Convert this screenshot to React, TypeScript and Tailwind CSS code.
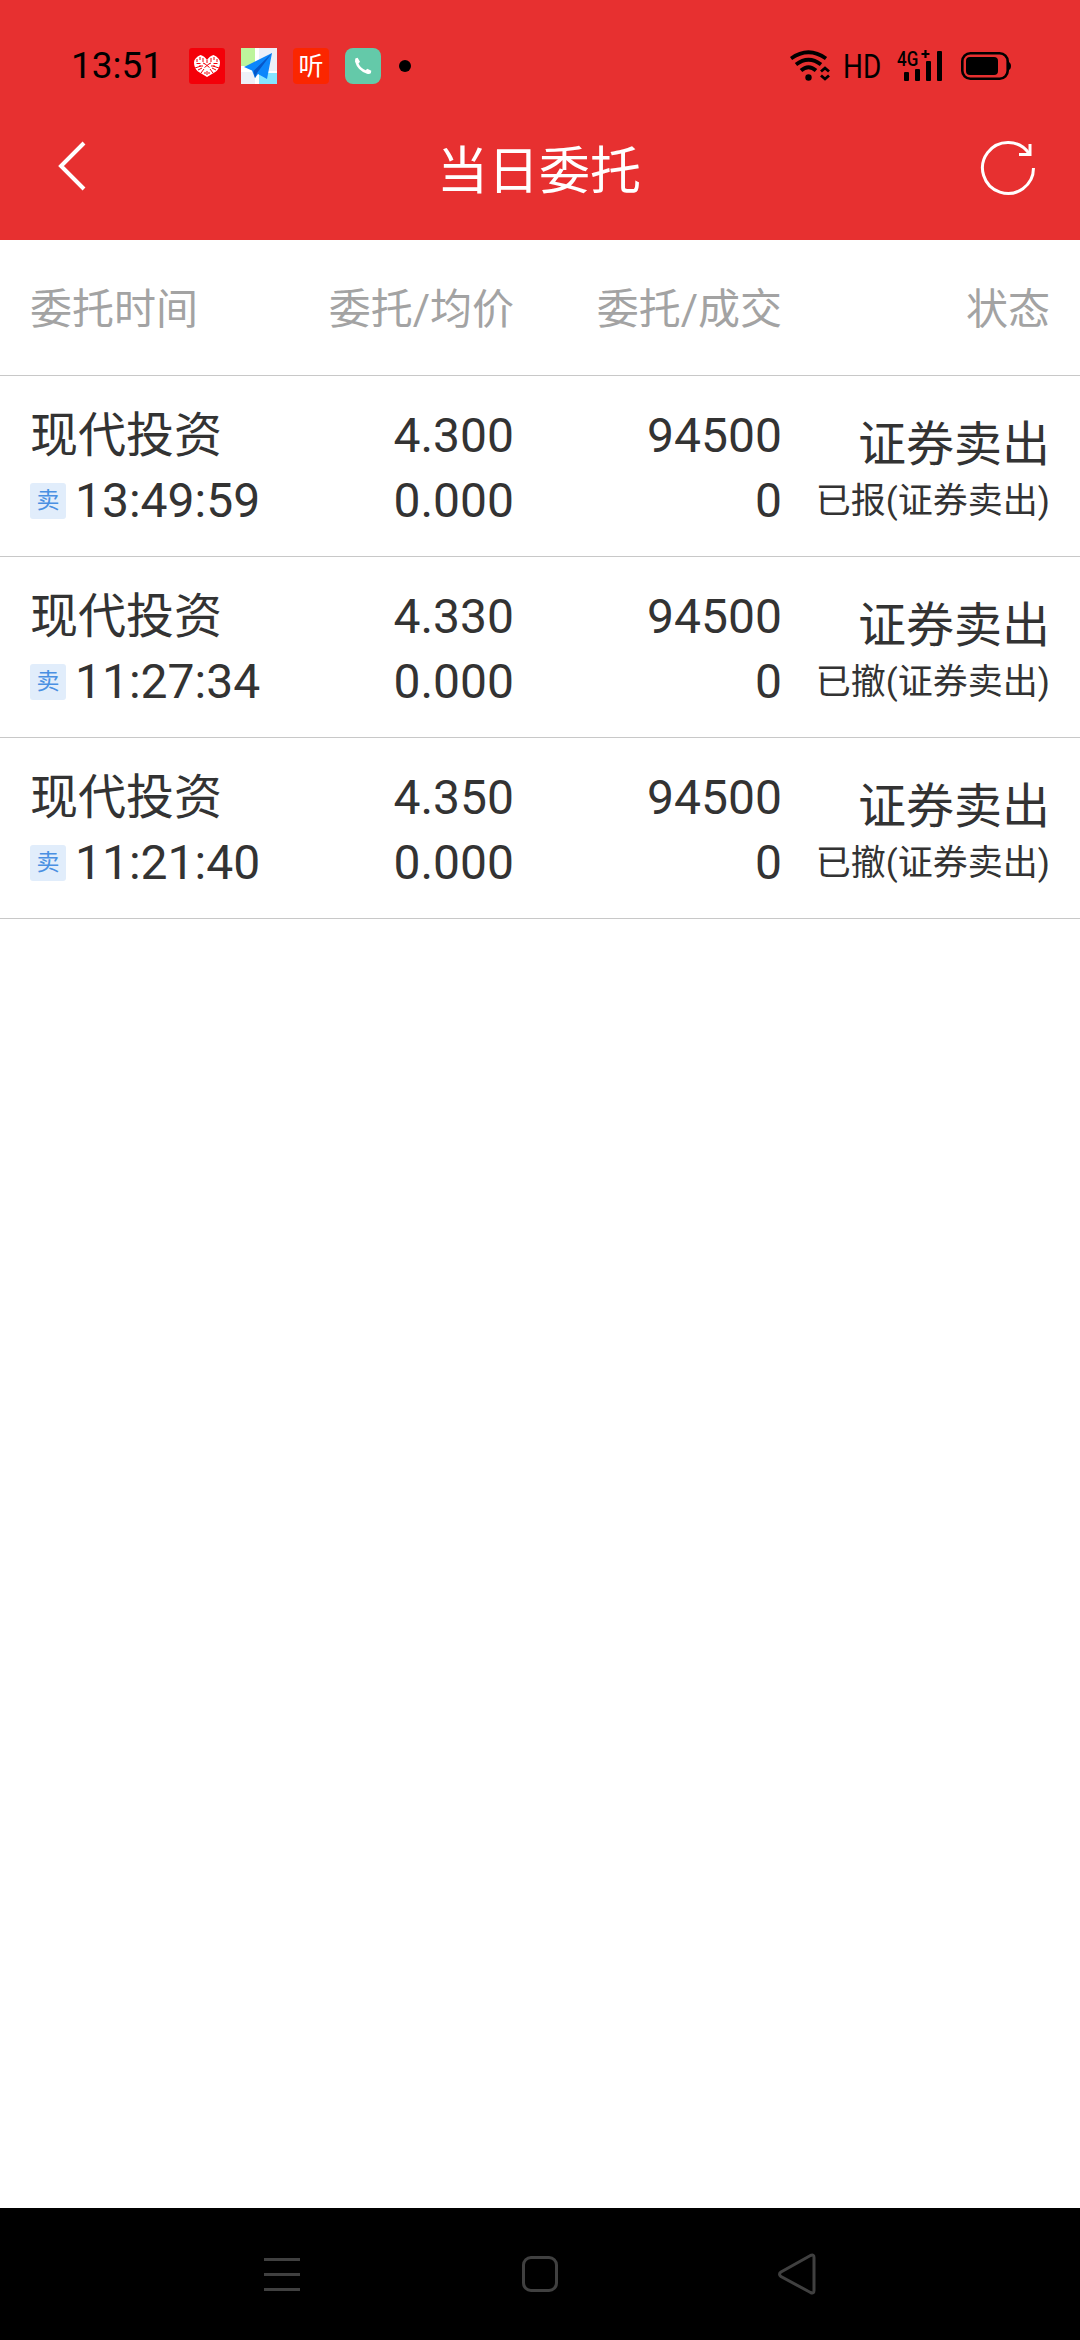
import React from "react";

type Order = {
  name: string;
  time: string;
  price: string;
  avgPrice: string;
  amount: string;
  dealt: string;
  action: string;
  status: string;
};

const ORDERS: Order[] = [
  {
    name: "现代投资",
    time: "13:49:59",
    price: "4.300",
    avgPrice: "0.000",
    amount: "94500",
    dealt: "0",
    action: "证券卖出",
    status: "已报(证券卖出)",
  },
  {
    name: "现代投资",
    time: "11:27:34",
    price: "4.330",
    avgPrice: "0.000",
    amount: "94500",
    dealt: "0",
    action: "证券卖出",
    status: "已撤(证券卖出)",
  },
  {
    name: "现代投资",
    time: "11:21:40",
    price: "4.350",
    avgPrice: "0.000",
    amount: "94500",
    dealt: "0",
    action: "证券卖出",
    status: "已撤(证券卖出)",
  },
];

const HeartAppIcon = () => (
  <svg width="36" height="36" viewBox="0 0 36 36">
    <rect width="36" height="36" rx="3" fill="#f40009" />
    <path
      d="M18 29 L9 23.500 Q5 20 5 14.500 Q5 10 11.500 7 Q15.500 8 18 12 Q20.500 8 24.500 7 Q31 10 31 14.500 Q31 20 27 23.500 Z"
      fill="#fff"
    />
    <g stroke="#f40009" strokeWidth="1" fill="none">
      <path d="M11 9v3M8 11v3M14 10v4M7.500 15.500h4M10 18h4M22 10v4M25 9v3M28 11v3M24.500 15.500h4M22 18h4" />
      <path d="M6 20l6-2M9 22l4-2M30 20l-6-2M27 22l-4-2M12 25l3-4M24 25l-3-4M18 23v4M15 25h2M19 25h2" />
      <path d="M18 12v3M15.500 15.500l5 4M20.500 15.500l-5 4M14 15l2 1M22 15l-2 1" />
    </g>
  </svg>
);

const MapAppIcon = () => (
  <svg width="36" height="36" viewBox="0 0 36 36">
    <rect width="36" height="36" fill="#fff" />
    <rect width="14" height="18" fill="#bdf59c" />
    <rect x="18" width="18" height="23" fill="#eceff8" />
    <rect y="24" width="14" height="12" fill="#eef0f8" />
    <rect x="18" y="25" width="18" height="11" fill="#86e4ff" />
    <path d="M31 5 L3 19 L11 22.500 L14 30 L17 26 L26 31 Z" fill="#0d86fb" />
    <path d="M31 5 L12.500 23 L14 30 L16 25 Z" fill="#0757c8" />
  </svg>
);

const PhoneAppIcon = () => (
  <svg width="36" height="36" viewBox="0 0 36 36">
    <rect width="36" height="36" rx="8" fill="#64c9a9" />
    <path
      d="M10.300 10.600 L12.600 9.800 L15 13.700 L13.500 15.400 Q15.500 20 20.700 22.200 L22.300 20.800 L26.300 22.800 L25.800 25.200 Q24.500 26.300 22 25.700 Q12.500 22.600 10 13.500 Z"
      fill="#fff"
    />
  </svg>
);

const WifiIcon = () => (
  <svg width="40" height="32" viewBox="0 0 40 32" fill="none" stroke="#000">
    <path d="M1 8.500 Q18.500 -4 36 8.500" strokeWidth="3.800" />
    <path d="M6 14.500 Q18.500 5 31 14.500" strokeWidth="3.800" />
    <path d="M11 20.500 Q18.500 14 26 20.500" strokeWidth="3.800" />
    <circle cx="18.500" cy="27.500" r="3.200" fill="#000" stroke="none" />
    <path d="M31 21.500 L35 18 L39 21.500 M31 25.500 L35 29 L39 25.500" strokeWidth="2.800" />
  </svg>
);

const SignalIcon = () => (
  <div className="relative h-8 w-[46px]">
    <span className="absolute -left-px -top-px origin-top-left scale-x-[0.85] font-[Roboto] text-[20px] font-medium leading-[20px] text-black">
      4G
    </span>
    <svg className="absolute left-0 top-0" width="46" height="32" viewBox="0 0 46 32">
      <path d="M23.500 4h8M27.500 0v8" stroke="#000" strokeWidth="2.200" />
      <rect x="6" y="22" width="5" height="9" rx="1" />
      <rect x="17" y="19" width="5" height="12" rx="1" />
      <rect x="28" y="11" width="5" height="20" rx="1" />
      <rect x="39" y="1" width="5" height="30" rx="1" />
    </svg>
  </div>
);

const BatteryIcon = () => (
  <svg width="51" height="28" viewBox="0 0 51 28">
    <rect x="1.300" y="1.300" width="45.400" height="25.400" rx="8" fill="none" stroke="#000" strokeWidth="2.600" />
    <rect x="5" y="5" width="32" height="18" rx="4" />
    <path d="M47 9.500 Q50 10.500 50 14 Q50 17.500 47 18.500 Z" />
  </svg>
);

const StatusBar = () => (
  <div className="flex h-[88px] items-center justify-between pl-[71px] pr-[68px] pt-[44px]">
    <div className="flex h-[36px] items-center gap-4">
      <span className="w-[102px] font-[Roboto] text-[37px] leading-[36px] text-black">13:51</span>
      <HeartAppIcon />
      <MapAppIcon />
      <div className="flex h-9 w-9 shrink-0 items-center justify-center rounded-[4px] bg-[#fb2600]">
        <span className="text-[25px] leading-none text-white">听</span>
      </div>
      <PhoneAppIcon />
      <div className="ml-[2px] h-3 w-3 rounded-full bg-black" />
    </div>
    <div className="flex h-[36px] items-center">
      <WifiIcon />
      <span className="ml-[13px] w-[40px] origin-left scale-x-[0.82] font-[Roboto] text-[34px] leading-[36px] text-black">
        HD
      </span>
      <div className="ml-[15px]">
        <SignalIcon />
      </div>
      <div className="ml-[17px]">
        <BatteryIcon />
      </div>
    </div>
  </div>
);

const TitleBar = () => (
  <div className="flex h-[152px] items-start justify-between pl-[56px] pr-[42px]">
    <svg className="mt-[52px]" width="32" height="52" viewBox="0 0 32 52" fill="none">
      <path d="M28 3 L5 26 L28 49" stroke="#fff" strokeWidth="4" />
    </svg>
    <h1 className="ml-[12px] mt-[51px] text-[51px] leading-[66px] text-white">当日委托</h1>
    <svg className="mt-[50px]" width="60" height="60" viewBox="0 0 60 60" fill="none" stroke="#fff" strokeWidth="3">
      <path d="M55.500 30 A25.500 25.500 0 1 1 51 15.500" />
      <path d="M52 6 V16.500 H41" />
    </svg>
  </div>
);

const OrderRow = ({ order }: { order: Order }) => (
  <div className="grid h-[181px] grid-cols-[216px_268px_268px_268px] border-b border-[#c8c8c8] px-[30px] pt-[27px] text-[48px] leading-[65px] text-[#333]">
    <div className="whitespace-nowrap">
      <div className="pt-px leading-[64px]">{order.name}</div>
      <div className="flex items-center">
        <span className="mr-[9px] flex h-9 w-9 shrink-0 items-center justify-center rounded-[3px] bg-[#e1edfb] text-[23px] leading-none text-[#4a90e2]">
          卖
        </span>
        {order.time}
      </div>
    </div>
    <div className="text-right">
      <div>{order.price}</div>
      <div>{order.avgPrice}</div>
    </div>
    <div className="text-right">
      <div>{order.amount}</div>
      <div>{order.dealt}</div>
    </div>
    <div className="whitespace-nowrap pt-[9px] text-right">
      <div>{order.action}</div>
      <div className="text-[35px] leading-[50px]">{order.status}</div>
    </div>
  </div>
);

const NavBar = () => (
  <div className="flex h-[132px] items-center justify-between bg-black px-[262px]">
    <svg width="40" height="44" viewBox="0 0 40 44" stroke="#404040" strokeWidth="3">
      <path d="M2 7.500h36M2 22.500h36M2 37.500h36" />
    </svg>
    <div className="h-9 w-9 rounded-[9px] border-[3px] border-[#404040]" />
    <svg width="40" height="44" viewBox="0 0 40 44" fill="none" stroke="#404040" strokeWidth="3">
      <path d="M32.500 3.500 L3 20 Q0 22 3 24.500 L32.500 40.500 Q36 42 36 38.500 V5.500 Q36 2 32.500 3.500 Z" />
    </svg>
  </div>
);

const App = () => {
  return (
    <div className="flex h-[2340px] w-[1080px] flex-col bg-white font-['Roboto','Noto_Sans_CJK_SC',sans-serif]">
      <header className="h-[240px] bg-[#e73030]">
        <StatusBar />
        <TitleBar />
      </header>
      <main className="flex-1">
        <div className="grid h-[136px] grid-cols-[216px_268px_268px_268px] items-center border-b border-[#c8c8c8] px-[30px] pt-[5px] text-[42px] leading-[60px] text-[#a3a3a3]">
          <div>委托时间</div>
          <div className="text-right">委托/均价</div>
          <div className="text-right">委托/成交</div>
          <div className="text-right">状态</div>
        </div>
        {ORDERS.map((order) => (
          <OrderRow key={order.time} order={order} />
        ))}
      </main>
      <NavBar />
    </div>
  );
};

export default App;
